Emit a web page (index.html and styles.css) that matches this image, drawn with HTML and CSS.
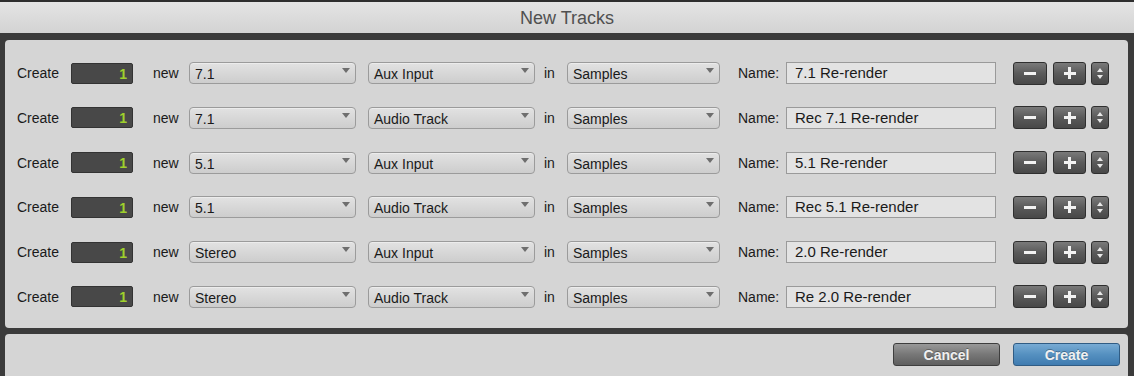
FILE: index.html
```html
<!DOCTYPE html>
<html lang="en">
<head>
    <meta charset="UTF-8">
    <title>New Tracks</title>
    <link rel="stylesheet" href="styles.css">
</head>
<body>
    <div class="dialog">
        <div class="titlebar">New Tracks</div>
        <div class="frame">
            <div class="panel tracks">
                <div class="row">
                    <span class="lbl lbl-create">Create</span>
                    <div class="count">1</div>
                    <span class="lbl lbl-new">new</span>
                    <div class="select sel-format">7.1</div>
                    <div class="select sel-type">Aux Input</div>
                    <span class="lbl lbl-in">in</span>
                    <div class="select sel-base">Samples</div>
                    <span class="lbl lbl-name">Name:</span>
                    <div class="name-field">7.1 Re-render</div>
                    <div class="btn-dark btn-minus"><span class="minus"></span></div>
                    <div class="btn-dark btn-plus"><span class="plus"></span></div>
                    <div class="btn-dark spin"><span class="up"></span><span class="down"></span></div>
                </div>
                <div class="row">
                    <span class="lbl lbl-create">Create</span>
                    <div class="count">1</div>
                    <span class="lbl lbl-new">new</span>
                    <div class="select sel-format">7.1</div>
                    <div class="select sel-type">Audio Track</div>
                    <span class="lbl lbl-in">in</span>
                    <div class="select sel-base">Samples</div>
                    <span class="lbl lbl-name">Name:</span>
                    <div class="name-field">Rec 7.1 Re-render</div>
                    <div class="btn-dark btn-minus"><span class="minus"></span></div>
                    <div class="btn-dark btn-plus"><span class="plus"></span></div>
                    <div class="btn-dark spin"><span class="up"></span><span class="down"></span></div>
                </div>
                <div class="row">
                    <span class="lbl lbl-create">Create</span>
                    <div class="count">1</div>
                    <span class="lbl lbl-new">new</span>
                    <div class="select sel-format">5.1</div>
                    <div class="select sel-type">Aux Input</div>
                    <span class="lbl lbl-in">in</span>
                    <div class="select sel-base">Samples</div>
                    <span class="lbl lbl-name">Name:</span>
                    <div class="name-field">5.1 Re-render</div>
                    <div class="btn-dark btn-minus"><span class="minus"></span></div>
                    <div class="btn-dark btn-plus"><span class="plus"></span></div>
                    <div class="btn-dark spin"><span class="up"></span><span class="down"></span></div>
                </div>
                <div class="row">
                    <span class="lbl lbl-create">Create</span>
                    <div class="count">1</div>
                    <span class="lbl lbl-new">new</span>
                    <div class="select sel-format">5.1</div>
                    <div class="select sel-type">Audio Track</div>
                    <span class="lbl lbl-in">in</span>
                    <div class="select sel-base">Samples</div>
                    <span class="lbl lbl-name">Name:</span>
                    <div class="name-field">Rec 5.1 Re-render</div>
                    <div class="btn-dark btn-minus"><span class="minus"></span></div>
                    <div class="btn-dark btn-plus"><span class="plus"></span></div>
                    <div class="btn-dark spin"><span class="up"></span><span class="down"></span></div>
                </div>
                <div class="row">
                    <span class="lbl lbl-create">Create</span>
                    <div class="count">1</div>
                    <span class="lbl lbl-new">new</span>
                    <div class="select sel-format">Stereo</div>
                    <div class="select sel-type">Aux Input</div>
                    <span class="lbl lbl-in">in</span>
                    <div class="select sel-base">Samples</div>
                    <span class="lbl lbl-name">Name:</span>
                    <div class="name-field">2.0 Re-render</div>
                    <div class="btn-dark btn-minus"><span class="minus"></span></div>
                    <div class="btn-dark btn-plus"><span class="plus"></span></div>
                    <div class="btn-dark spin"><span class="up"></span><span class="down"></span></div>
                </div>
                <div class="row">
                    <span class="lbl lbl-create">Create</span>
                    <div class="count">1</div>
                    <span class="lbl lbl-new">new</span>
                    <div class="select sel-format">Stereo</div>
                    <div class="select sel-type">Audio Track</div>
                    <span class="lbl lbl-in">in</span>
                    <div class="select sel-base">Samples</div>
                    <span class="lbl lbl-name">Name:</span>
                    <div class="name-field">Re 2.0 Re-render</div>
                    <div class="btn-dark btn-minus"><span class="minus"></span></div>
                    <div class="btn-dark btn-plus"><span class="plus"></span></div>
                    <div class="btn-dark spin"><span class="up"></span><span class="down"></span></div>
                </div>
            </div>
            <div class="panel footer">
                <button class="action cancel">Cancel</button>
                <button class="action create">Create</button>
            </div>
        </div>
    </div>
</body>
</html>
```

FILE: styles.css
```css
* {
    box-sizing: border-box;
}

body {
    margin: 0;
    padding: 0;
    font-family: "Liberation Sans", Arial, sans-serif;
    font-size: 14px;
    color: #1a1a1a;
    background-color: #3a3a3a;
    overflow: hidden;
}

.dialog {
    width: 1134px;
    height: 376px;
    display: flex;
    flex-direction: column;
}

.titlebar {
    height: 33px;
    border-top: 2px solid #2e2e2e;
    background: linear-gradient(#e4e4e4, #d3d3d3);
    color: #505050;
    font-size: 18px;
    text-align: center;
    line-height: 32px;
}

.frame {
    flex: 1;
    background-color: #3b3b3b;
    padding: 7px 6px 0 5px;
    display: flex;
    flex-direction: column;
    gap: 6px;
}

.panel {
    background-color: #d5d5d5;
    border-radius: 4px;
}

.tracks {
    height: 288px;
    padding: 22px 0 0 12px;
    display: flex;
    flex-direction: column;
    gap: 22.8px;
}

.row {
    display: flex;
    align-items: center;
    height: 22px;
}

.lbl {
    flex: none;
    line-height: 24px;
}

.lbl-create {
    width: 54px;
}

.lbl-new {
    width: 56px;
    padding-left: 20px;
}

.lbl-in {
    width: 32px;
    padding-left: 9px;
}

.lbl-name {
    width: 66px;
    padding-left: 18px;
}

.count {
    flex: none;
    width: 62px;
    height: 21px;
    background-color: #484848;
    border: 1px solid #333;
    border-radius: 2px;
    color: #9fd02c;
    text-align: right;
    padding-right: 5px;
    font-size: 14px;
    font-weight: bold;
    line-height: 20px;
}

.select {
    flex: none;
    position: relative;
    height: 22px;
    border: 1px solid #9b9b9b;
    border-radius: 4px;
    background: linear-gradient(#e2e2e2, #cdcdcd);
    padding-left: 5px;
    line-height: 22px;
    box-shadow: inset 0 1px 0 #ececec;
}

.select::after {
    content: "";
    position: absolute;
    right: 5px;
    top: 5px;
    border-left: 4px solid transparent;
    border-right: 4px solid transparent;
    border-top: 5px solid #6e6e6e;
}

.sel-format {
    width: 167px;
}

.sel-type {
    width: 167px;
    margin-left: 12px;
}

.sel-base {
    width: 153px;
}

.name-field {
    flex: none;
    width: 210px;
    height: 22px;
    border: 1px solid #9a9a9a;
    background-color: #e3e3e3;
    padding-left: 8px;
    font-size: 15px;
    line-height: 20px;
}

.btn-dark {
    flex: none;
    height: 23px;
    border: 1px solid #2f2f2f;
    border-radius: 3px;
    background: linear-gradient(#7a7a7a, #5a5a5a 50%, #484848);
    display: flex;
    align-items: center;
    justify-content: center;
    position: relative;
}

.btn-minus {
    width: 34px;
    margin-left: 17px;
}

.btn-plus {
    width: 33px;
    margin-left: 6px;
}

.spin {
    width: 18px;
    margin-left: 5px;
    flex-direction: column;
    gap: 3px;
}

.minus {
    width: 12px;
    height: 3px;
    background-color: #f2f2f2;
}

.plus {
    width: 12px;
    height: 12px;
    background:
        linear-gradient(#f2f2f2, #f2f2f2) center / 12px 3px no-repeat,
        linear-gradient(#f2f2f2, #f2f2f2) center / 3px 12px no-repeat;
}

.up {
    border-left: 3px solid transparent;
    border-right: 3px solid transparent;
    border-bottom: 4px solid #e8e8e8;
}

.down {
    border-left: 3px solid transparent;
    border-right: 3px solid transparent;
    border-top: 4px solid #e8e8e8;
}

.footer {
    flex: 1;
    border-radius: 4px 4px 0 0;
    display: flex;
    justify-content: flex-end;
    align-items: flex-start;
    gap: 13px;
    padding: 9px 8px 0 0;
}

.action {
    width: 107px;
    height: 23px;
    border-radius: 3px;
    font-family: "Liberation Sans", Arial, sans-serif;
    font-size: 14px;
    font-weight: bold;
    color: #f0f0f0;
    padding: 0;
    text-shadow: 0 -1px 0 rgba(0, 0, 0, 0.3);
}

.cancel {
    border: 1px solid #3e3e3e;
    background: linear-gradient(#999, #777 50%, #5e5e5e);
}

.create {
    border: 1px solid #305c84;
    background: linear-gradient(#78abd4, #5590c0 50%, #3f7bb0);
}
```
